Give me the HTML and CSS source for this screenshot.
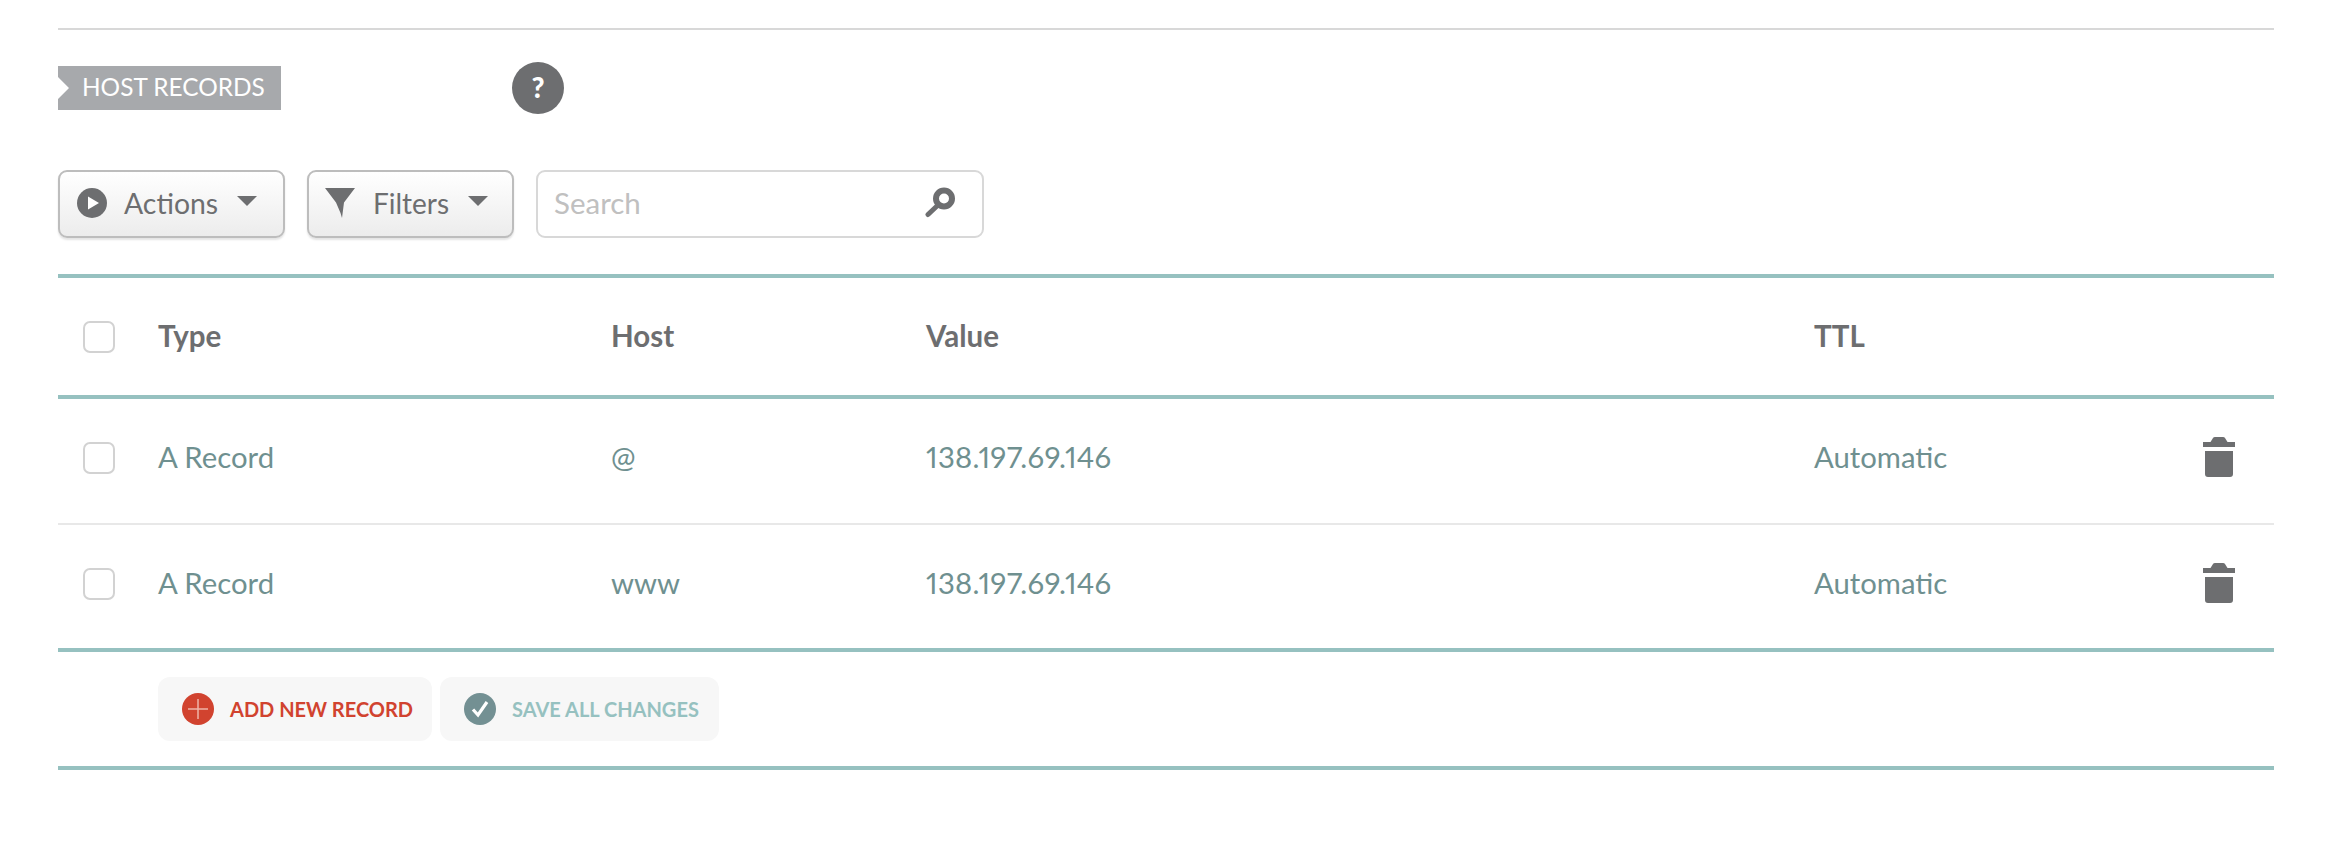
FILE: index.html
```html
<!DOCTYPE html>
<html lang="en">
<head>
<meta charset="utf-8">
<title>Host Records</title>
<link rel="stylesheet" href="styles.css">
</head>
<body>
<main class="page">
  <header class="section-head">
    <h2 class="badge">HOST RECORDS</h2>
    <span class="help">?</span>
  </header>
  <div class="toolbar">
    <button class="tool tool-actions">
      <svg class="ico-play" viewBox="0 0 30 30"><circle cx="15" cy="15" r="15" fill="#6d6e70"/><path d="M11 8.500 22 15 11 21.500Z" fill="#fff"/></svg>
      <span>Actions</span><i class="caret"></i>
    </button>
    <button class="tool tool-filters">
      <svg class="ico-funnel" viewBox="0 0 30 30"><path d="M0 0H30L19 14.500 17 30 15.500 25 11 14.500Z" fill="#6d6e70"/></svg>
      <span>Filters</span><i class="caret"></i>
    </button>
    <div class="search">
      <span class="placeholder">Search</span>
      <svg class="ico-search" viewBox="0 0 30 31"><circle cx="19" cy="11.500" r="8" fill="none" stroke="#6d6e70" stroke-width="6"/><path d="M12 19 3 27.500" stroke="#6d6e70" stroke-width="5" stroke-linecap="round"/></svg>
    </div>
  </div>
  <section class="records">
    <div class="row row-head">
      <span class="check"></span><span class="cell">Type</span><span class="cell">Host</span><span class="cell">Value</span><span class="cell">TTL</span><span></span>
    </div>
    <div class="row row-body row-first">
      <span class="check"></span><span class="cell">A Record</span><span class="cell">@</span><span class="cell ip">138.197.69.146</span><span class="cell">Automatic</span>
      <svg class="ico-trash" viewBox="0 0 32 40"><path d="M0 5H7.500L10 1Q10.500 0 12 0H20Q21.500 0 22 1L24.500 5H32V10H0ZM2 14H30V37Q30 40 27 40H5Q2 40 2 37Z" fill="#6d6e70"/></svg>
    </div>
    <div class="row row-body">
      <span class="check"></span><span class="cell">A Record</span><span class="cell">www</span><span class="cell ip">138.197.69.146</span><span class="cell">Automatic</span>
      <svg class="ico-trash" viewBox="0 0 32 40"><path d="M0 5H7.500L10 1Q10.500 0 12 0H20Q21.500 0 22 1L24.500 5H32V10H0ZM2 14H30V37Q30 40 27 40H5Q2 40 2 37Z" fill="#6d6e70"/></svg>
    </div>
  </section>
  <footer class="actions">
    <button class="act act-add">
      <svg class="ico-act" viewBox="0 0 32 32"><circle cx="16" cy="16" r="16" fill="#d1432f"/><path d="M16 6V26M6 16H26" stroke="#eeb4a8" stroke-width="1.500"/></svg>
      <span>ADD NEW RECORD</span>
    </button>
    <button class="act act-save">
      <svg class="ico-act" viewBox="0 0 32 32"><circle cx="16" cy="16" r="16" fill="#739093"/><path d="M9 16.500 14 22 23 9" fill="none" stroke="#fff" stroke-width="3.200"/></svg>
      <span>SAVE ALL CHANGES</span>
    </button>
  </footer>
</main>
</body>
</html>
```
FILE: styles.css
```css
* { box-sizing: border-box; }
html, body { margin: 0; background: #fff; }
body { font-family: Lato, "Open Sans", sans-serif; color: #6d6e70; font-variant-numeric: proportional-nums; }
button { font-family: inherit; padding: 0; margin: 0; cursor: pointer; }
.page { margin: 28px 68px 0 58px; border-top: 2px solid #d8d8d8; }

.section-head { display: flex; align-items: center; height: 52px; margin-top: 32px; }
.badge {
  width: 223px; height: 44px; margin: 0; padding-left: 24px;
  background: #a7a9ac; color: #fff; font-size: 24.400px; font-weight: 400; line-height: 41px;
  clip-path: polygon(0 0, 100% 0, 100% 100%, 0 100%, 0 33px, 11px 22px, 0 11px);
}
.help {
  width: 52px; height: 52px; margin-left: 231px; border-radius: 50%;
  background: #6d6e70; color: #fff; font-size: 28px; font-weight: 900; line-height: 50px; text-align: center;
}

.toolbar { display: flex; height: 68px; margin-top: 56px; }
.tool {
  display: flex; align-items: center; height: 68px; padding-bottom: 2px;
  border: 2px solid #bdbdbd; border-radius: 9px; color: #6d6e70; font-size: 28.400px;
  background: linear-gradient(#fff, #ececec); box-shadow: 0 2px 2px #e4e4e4;
}
.tool-actions { width: 227px; padding-left: 17px; }
.tool-filters { width: 207px; margin-left: 22px; padding-left: 16px; font-size: 28px; }
.ico-play { width: 30px; height: 30px; margin-right: 17px; }
.ico-funnel { width: 30px; height: 30px; margin-right: 18px; }
.caret {
  width: 0; height: 0; margin: -4px 0 0 19px;
  border-left: 10px solid transparent; border-right: 10px solid transparent; border-top: 10px solid #6d6e70;
}
.search {
  display: flex; align-items: center; justify-content: space-between;
  width: 448px; margin-left: 22px; padding: 0 27px 3px 16px;
  border: 2px solid #d8d8d8; border-radius: 9px; background: #fff;
}
.placeholder { color: #c0c0c0; font-size: 29.500px; }
.ico-search { width: 30px; height: 31px; margin-top: -1px; }

.records { margin-top: 36px; border-top: 4px solid #96c1c0; border-bottom: 4px solid #96c1c0; }
.row { display: grid; grid-template-columns: 100px 453px 315px 888px 1fr 71px; align-items: center; }
.cell { padding-bottom: 3px; }
.ip { letter-spacing: 0.300px; }
.row-head { height: 117px; font-size: 29.500px; font-weight: 700; }
.row-body { height: 125px; padding-bottom: 6px; color: #6f9090; font-size: 29.300px; border-top: 2px solid #e8e8e8; }
.row-first { height: 128px; border-top: 4px solid #96c1c0; }
.check { width: 32px; height: 32px; margin-left: 25px; border: 2px solid #d2d2d2; border-radius: 7px; background: #fff; }
.ico-trash { width: 32px; height: 40px; margin-bottom: 2px; }

.actions { display: flex; gap: 8px; height: 118px; padding: 25px 0 0 100px; border-bottom: 4px solid #96c1c0; }
.act {
  display: flex; align-items: center; height: 64px; border: 0; border-radius: 12px;
  background: #f7f7f7; font-size: 20px; font-weight: 700;
}
.act-add { width: 274px; padding-left: 24px; color: #d1432f; }
.act-save { width: 279px; padding-left: 24px; color: #96c1c0; }
.ico-act { width: 32px; height: 32px; margin-right: 16px; }
```
